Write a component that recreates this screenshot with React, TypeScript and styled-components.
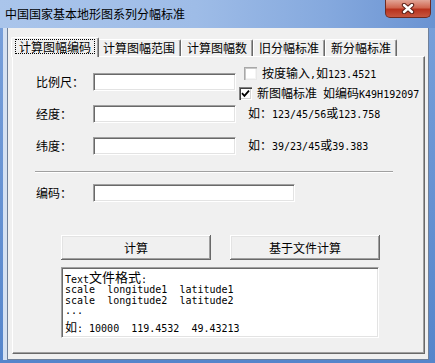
import React from "react";
import styled, { createGlobalStyle } from "styled-components";

const GlobalStyle = createGlobalStyle`
  html, body {
    margin: 0;
    padding: 0;
    background: #ffffff;
  }
  body {
    font-family: "Noto Sans CJK SC", "Noto Sans", sans-serif;
    font-size: 12px;
    color: #000;
  }
`;

const Window = styled.div`
  width: 435px;
  height: 363px;
  display: flex;
  flex-direction: column;
  background: linear-gradient(180deg, #7aa1db 0%, #5585cb 100%);
  overflow: hidden;
`;

const TitleBar = styled.div`
  height: 28px;
  flex: none;
  display: flex;
  align-items: flex-start;
  justify-content: space-between;
  background: linear-gradient(90deg, #aac5eb 0%, #9ebce7 45%, #85a9de 75%, #6a93d2 100%);
`;

const Title = styled.div`
  padding: 6px 0 0 5px;
  line-height: 16px;
  font-size: 12px;
  white-space: nowrap;
`;

const CloseButton = styled.div`
  width: 46px;
  height: 18px;
  margin-right: 4px;
  display: flex;
  align-items: center;
  justify-content: center;
  box-sizing: border-box;
  border: 1px solid #6e2b22;
  border-top: 0;
  border-radius: 0 0 5px 5px;
  background: linear-gradient(180deg, #e2a597 0%, #d06650 45%, #b8321d 55%, #c65640 100%);
`;

const Frame = styled.div`
  flex: 1;
  display: flex;
  padding: 0 6px 3px 3px;
`;

const Inner = styled.div`
  flex: 1;
  display: flex;
  border-left: 4px solid #d5e1f2;
`;

const Client = styled.div`
  flex: 1;
  display: flex;
  flex-direction: column;
  background: #f0f0f0;
  border: 1px solid #6f8099;
  border-top: 0;
  padding: 9px 3px 5px 4px;
`;

const TabRow = styled.div`
  height: 20px;
  margin-bottom: -1px;
  padding-left: 1px;
  display: flex;
  align-items: flex-start;
  position: relative;
  z-index: 1;
`;

const Tab = styled.div<{ $active?: boolean }>`
  position: relative;
  box-sizing: border-box;
  height: ${(p) => (p.$active ? 20 : 17)}px;
  margin: ${(p) => (p.$active ? "0 -2px 0" : "2px 0 0")};
  padding: 0 ${(p) => (p.$active ? 7 : 5)}px ${(p) => (p.$active ? 2 : 0)}px;
  display: flex;
  align-items: center;
  white-space: nowrap;
  line-height: 14px;
  background: #f0f0f0;
  border-top: 1px solid #ffffff;
  border-left: 1px solid #ffffff;
  border-right: 1px solid #696969;
  box-shadow: inset -1px 0 #a0a0a0;
  border-radius: 2px 2px 0 0;
  z-index: ${(p) => (p.$active ? 2 : 1)};

  ${(p) =>
    p.$active &&
    `
    &::after {
      content: "";
      position: absolute;
      left: 3px;
      right: 3px;
      top: 1px;
      bottom: 3px;
      border: 1px dotted #000;
    }
  `}
`;

const Panel = styled.div`
  flex: 1;
  display: flex;
  flex-direction: column;
  background: #f0f0f0;
  border: 1px solid;
  border-color: #ffffff #696969 #696969 #ffffff;
  box-shadow: inset -1px -1px #a0a0a0;
  padding: 16px 0 0 23px;
`;

const FieldGroup = styled.div`
  display: flex;
  flex-direction: column;
  gap: 14px;
`;

const Row = styled.div`
  height: 18px;
  display: flex;
  align-items: center;
`;

const Label = styled.div`
  width: 57px;
  flex: none;
  line-height: 16px;
`;

const TextBox = styled.div<{ $w: number }>`
  width: ${(p) => p.$w}px;
  height: 18px;
  flex: none;
  box-sizing: border-box;
  background: #ffffff;
  border: 1px solid;
  border-color: #a0a0a0 #ffffff #ffffff #a0a0a0;
  box-shadow: inset 1px 1px #696969, inset -1px -1px #e3e3e3;
`;

const Checks = styled.div`
  align-self: flex-start;
  margin: -6px 0 0 8px;
  display: flex;
  flex-direction: column;
  gap: 7px;
`;

const CheckRow = styled.div<{ $shift?: number }>`
  height: 13px;
  display: flex;
  align-items: center;
  gap: 5px;
  margin-left: ${(p) => p.$shift ?? 0}px;
  white-space: nowrap;
  line-height: 14px;
`;

const CheckBox = styled.div<{ $checked?: boolean }>`
  width: 13px;
  height: 13px;
  flex: none;
  box-sizing: border-box;
  background: #ffffff;
  display: flex;
  align-items: center;
  justify-content: center;
  box-shadow: ${(p) =>
    p.$checked
      ? "inset 1px 1px #808080, inset 2px 2px #404040, inset -1px -1px #ffffff, inset -2px -2px #d4d4d4"
      : "inset 1px 1px #a8a8a8, inset 2px 2px #c8c8c8, inset -1px -1px #e8e8e8, inset -2px -2px #f4f4f4"};
`;

const Hint = styled.div`
  margin-left: 12px;
  white-space: nowrap;
  line-height: 14px;
`;

const Asc = styled.span`
  font-family: "DejaVu Sans Mono", "Liberation Mono", monospace;
  font-size: 10px;
  white-space: pre;
`;

const Separator = styled.div`
  width: 358px;
  height: 0;
  margin: 16px 0 0 -1px;
  border-top: 1px solid #a0a0a0;
  border-bottom: 1px solid #ffffff;
`;

const CodeRow = styled(Row)`
  margin-top: 11px;
`;

const ButtonRow = styled.div`
  display: flex;
  gap: 19px;
  margin: 33px 0 0 25px;
`;

const Button = styled.div`
  width: 150px;
  height: 25px;
  display: flex;
  align-items: center;
  justify-content: center;
  background: #f0f0f0;
  box-shadow: inset -1px -1px #696969, inset 1px 1px #ffffff,
    inset -2px -2px #a0a0a0, inset 2px 2px #e3e3e3;
`;

const Memo = styled.div`
  width: 318px;
  height: 71px;
  margin: 7px 0 0 25px;
  box-sizing: border-box;
  background: #ffffff;
  border: 1px solid;
  border-color: #a0a0a0 #ffffff #ffffff #a0a0a0;
  box-shadow: inset 1px 1px #696969, inset -1px -1px #e3e3e3;
  padding: 2px 0 0 3px;
  font-family: "DejaVu Sans Mono", "Liberation Mono", monospace;
  font-size: 10px;
  overflow: hidden;
`;

const MemoLine = styled.div<{ $h?: number; $gap?: number }>`
  height: ${(p) => p.$h ?? 11}px;
  line-height: ${(p) => p.$h ?? 11}px;
  margin-top: ${(p) => p.$gap ?? 0}px;
  white-space: pre;
`;

const Cjk = styled.span<{ $size: number; $lift?: number }>`
  font-family: "Noto Sans CJK SC", sans-serif;
  font-size: ${(p) => p.$size}px;
  vertical-align: ${(p) => p.$lift ?? 0}px;
`;

const tabs = ["计算图幅编码", "计算图幅范围", "计算图幅数", "旧分幅标准", "新分幅标准"];

export default function App() {
  return (
    <>
      <GlobalStyle />
      <Window>
        <TitleBar>
          <Title>中国国家基本地形图系列分幅标准</Title>
          <CloseButton>
            <svg width="14" height="11" viewBox="0 0 14 11">
              <path d="M3 2 L11 9 M11 2 L3 9" stroke="#5a2018" strokeWidth="4.4" strokeLinecap="round" />
              <path d="M3 2 L11 9 M11 2 L3 9" stroke="#ffffff" strokeWidth="2.4" strokeLinecap="round" />
            </svg>
          </CloseButton>
        </TitleBar>
        <Frame>
          <Inner>
            <Client>
              <TabRow>
                {tabs.map((t, i) => (
                  <Tab key={t} $active={i === 0}>
                    {t}
                  </Tab>
                ))}
              </TabRow>
              <Panel>
                <FieldGroup>
                  <Row>
                    <Label>比例尺：</Label>
                    <TextBox $w={143} />
                    <Checks>
                      <CheckRow>
                        <CheckBox />
                        <span>
                          按度输入<Asc>,</Asc>如<Asc>123.4521</Asc>
                        </span>
                      </CheckRow>
                      <CheckRow $shift={-5}>
                        <CheckBox $checked>
                          <svg width="9" height="9" viewBox="0 0 9 9">
                            <path d="M1 4.2 L3.4 6.8 L8 1.6" stroke="#000" strokeWidth="1.8" fill="none" />
                          </svg>
                        </CheckBox>
                        <span>
                          新图幅标准<Asc> </Asc>如编码<Asc>K49H192097</Asc>
                        </span>
                      </CheckRow>
                    </Checks>
                  </Row>
                  <Row>
                    <Label>经度：</Label>
                    <TextBox $w={143} />
                    <Hint>
                      如：<Asc>123/45/56</Asc>或<Asc>123.758</Asc>
                    </Hint>
                  </Row>
                  <Row>
                    <Label>纬度：</Label>
                    <TextBox $w={143} />
                    <Hint>
                      如：<Asc>39/23/45</Asc>或<Asc>39.383</Asc>
                    </Hint>
                  </Row>
                </FieldGroup>
                <Separator />
                <CodeRow>
                  <Label>编码：</Label>
                  <TextBox $w={202} />
                </CodeRow>
                <ButtonRow>
                  <Button>计算</Button>
                  <Button>基于文件计算</Button>
                </ButtonRow>
                <Memo>
                  <MemoLine $h={14}>
                    Text<Cjk $size={13} $lift={1}>文件格式</Cjk>:
                  </MemoLine>
                  <MemoLine>scale  longitude1  latitude1</MemoLine>
                  <MemoLine>scale  longitude2  latitude2</MemoLine>
                  <MemoLine $h={9}>...</MemoLine>
                  <MemoLine $h={13} $gap={5}>
                    <Cjk $size={12}>如</Cjk>: 10000  119.4532  49.43213
                  </MemoLine>
                </Memo>
              </Panel>
            </Client>
          </Inner>
        </Frame>
      </Window>
    </>
  );
}
